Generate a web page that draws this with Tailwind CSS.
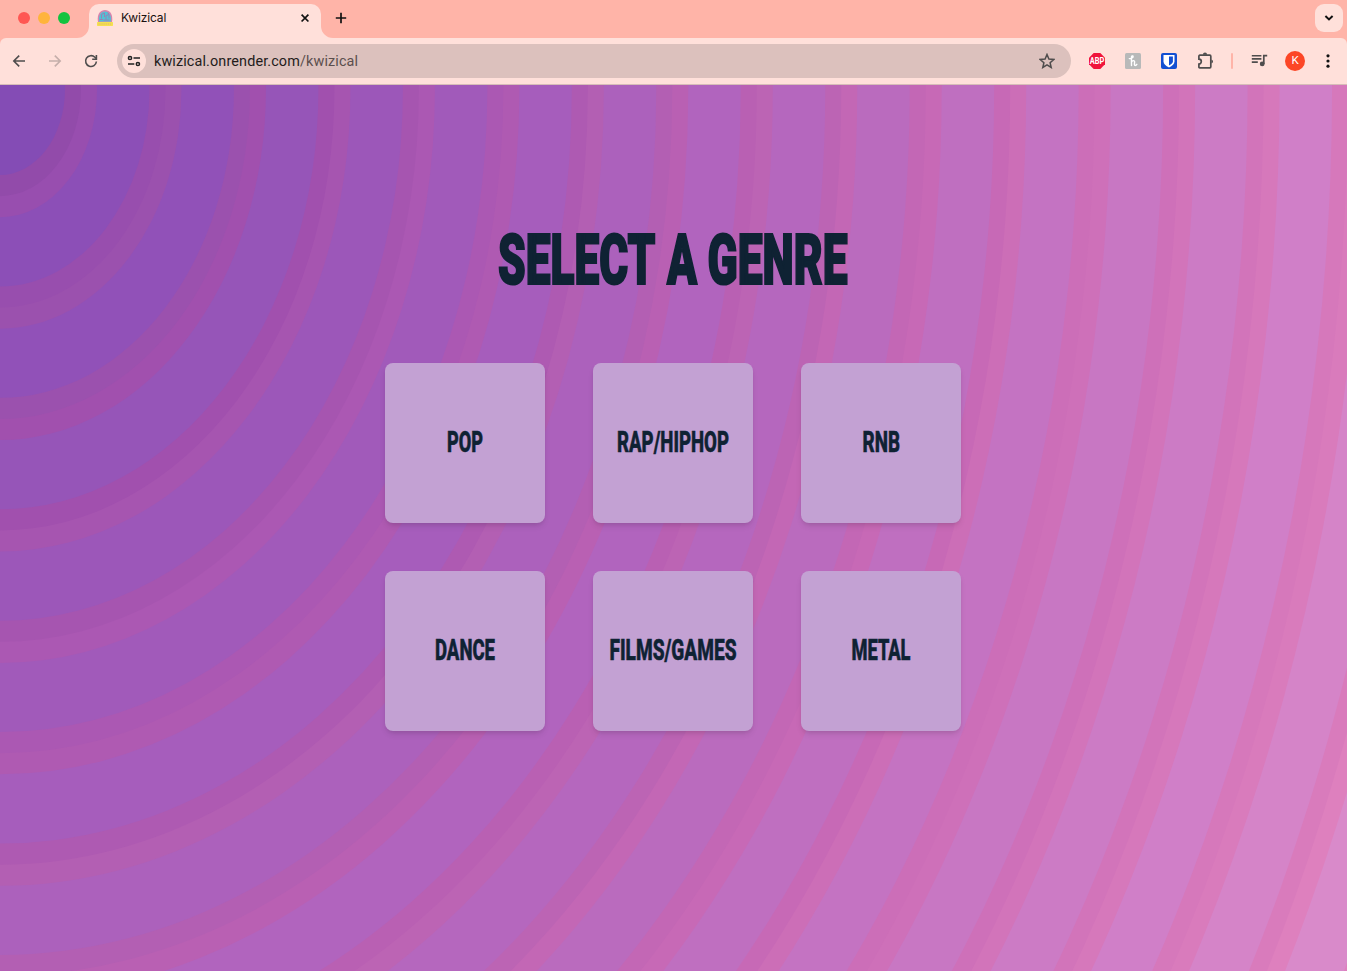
<!DOCTYPE html>
<html lang="en">
<head>
<meta charset="utf-8">
<title>Kwizical</title>
<script src="https://cdn.jsdelivr.net/npm/@tailwindcss/browser@4"></script>
</head>
<body class="h-[971px] w-[1347px] overflow-hidden bg-[#ffb4a8] font-['Inter',sans-serif]">
<div class="flex h-full flex-col">
  <!-- tab strip -->
  <header class="flex h-[38px] shrink-0 items-start pr-1">
    <div class="flex h-9 w-[77px] items-center gap-2 pl-[18px]">
      <span class="size-3 rounded-full bg-[#ff5753]"></span>
      <span class="size-3 rounded-full bg-[#ffb43c]"></span>
      <span class="size-3 rounded-full bg-[#13c33f]"></span>
    </div>
    <svg class="mt-[26px] size-3" viewBox="0 0 12 12"><path d="M12 0v12H0A12 12 0 0 0 12 0z" fill="#ffe0da"/></svg>
    <div class="mt-1 flex h-[34px] w-[232px] rounded-t-[10px] bg-[#ffe0da] pl-2">
      <svg class="mt-[6px] size-4" viewBox="0 0 16 16">
        <path d="M1 12C-.2 5 2.600 0 8 0s8.200 5 7 12z" fill="#d884ad"/>
        <path d="M2.200 11.500C1.200 5.500 4 1.400 8 1.400s6.800 4.100 5.800 10.100z" fill="#50c3d5"/>
        <path d="M4.500 4.500v4M4.500 4.500L7.500 3v4M9 5.500v4M9 5.500l3-1v4M2.800 9.500h3M10.500 2.800l1.500 1M6.500 10h6" stroke="#9a7fb5" stroke-width="1" fill="none"/>
        <rect y="12" width="16" height="4" rx=".7" fill="#f5e04e"/>
        <path d="M1.500 14h13" stroke="#e0b96a" stroke-width="1.100" stroke-dasharray="1.200 .7"/>
      </svg>
      <span class="ml-2 mt-[6px] w-[176px] text-[12px] leading-4 tracking-[-0.01em] text-[#1a1110]">Kwizical</span>
      <svg class="mt-[6px] size-4" viewBox="0 0 16 16"><path d="M4.600 4.700l6.800 6.800M11.400 4.700l-6.800 6.800" stroke="#111" stroke-width="1.700"/></svg>
    </div>
    <svg class="mt-[26px] size-3" viewBox="0 0 12 12"><path d="M0 0v12h12A12 12 0 0 1 0 0z" fill="#ffe0da"/></svg>
    <svg class="mt-[10px] size-4" viewBox="0 0 16 16"><path d="M8 2.800v10.400M2.800 8h10.400" stroke="#111" stroke-width="1.700"/></svg>
    <div class="ml-auto mt-1 flex size-7 items-center justify-center rounded-[9px] bg-[#ffe0da]">
      <svg class="size-4" viewBox="0 0 16 16"><path d="M4.400 6L8 9.400 11.600 6" fill="none" stroke="#111" stroke-width="2"/></svg>
    </div>
  </header>
  <!-- toolbar -->
  <div class="flex h-[47px] shrink-0 items-center rounded-t-[6px] border-b border-[#d6bdb8] bg-[#ffe0da] pl-[11px]">
    <svg class="size-4" viewBox="0 0 16 16"><path d="M14 8H3M8.200 2.600L2.800 8l5.400 5.400" fill="none" stroke="#4f4d4d" stroke-width="1.600"/></svg>
    <svg class="ml-5 size-4" viewBox="0 0 16 16"><path d="M2 8h11M7.800 2.600L13.200 8l-5.400 5.400" fill="none" stroke="#c5aeaa" stroke-width="1.600"/></svg>
    <svg class="ml-5 size-4" viewBox="0 0 16 16"><path d="M13.400 8.500A5.400 5.400 0 1 1 11.900 4.300L13.400 5.800" fill="none" stroke="#4f4d4d" stroke-width="1.600"/><path d="M14.200 2v5H9.200V5.400h3.400V2z" fill="#4f4d4d"/></svg>
    <div class="ml-[18px] flex h-[34px] w-[954px] items-center rounded-full bg-[#dcc1bd] pl-[5px] pr-4">
      <span class="flex size-6 items-center justify-center rounded-full bg-[#ffe0da]">
        <svg class="size-4" viewBox="0 0 16 16" fill="none" stroke="#222" stroke-width="1.500"><circle cx="4" cy="5" r="1.600"/><path d="M7.500 5H14M2 11h6.300"/><circle cx="11.900" cy="11" r="1.600"/></svg>
      </span>
      <svg class="ml-2 h-5 w-[230px]" viewBox="0 0 230 20" font-family="Roboto, sans-serif" font-size="14.400"><text x="0" y="15" textLength="204" fill="#231c1b">kwizical.onrender.com<tspan fill="#5b4f4d">/kwizical</tspan></text></svg>
      <svg class="ml-auto size-4" viewBox="0 0 16 16"><path d="M8 1.500l1.900 4.600 4.900.4-3.700 3.200 1.100 4.800L8 11.900l-4.200 2.600 1.100-4.800L1.200 6.500l4.900-.4z" fill="none" stroke="#4f4d4d" stroke-width="1.500"/></svg>
    </div>
    <svg class="ml-[18px] size-4 overflow-visible" viewBox="0 0 16 16"><path d="M4.700 0h6.600L16 4.700v6.600L11.300 16H4.700L0 11.300V4.700z" fill="#f0143c"/><text x="8" y="11.100" text-anchor="middle" font-family="Roboto, sans-serif" font-weight="700" font-size="8.600" textLength="14.600" lengthAdjust="spacingAndGlyphs" fill="#fff">ABP</text></svg>
    <svg class="ml-5 size-4" viewBox="0 0 16 16"><rect width="16" height="16" rx="1.500" fill="#b8b9b9"/><path d="M4.300 5.600c2.200 0 3.900-.9 3.800-2.100-.1-1-1.800-.8-1.700 1.200L6.500 12.500M6.500 9.300c.8-2 3.200-2.300 3.100-.3-.1 1.500-.6 3.500.6 3.500.9 0 1.400-.6 1.700-1.200" fill="none" stroke="#fff" stroke-width="1.400" stroke-linecap="round"/></svg>
    <svg class="ml-5 size-4" viewBox="0 0 16 16"><rect width="16" height="16" rx="2" fill="#124fd2"/><path d="M2.500 2h11v6.200c0 2.800-2.200 4.600-5.500 6.200-3.300-1.600-5.500-3.400-5.500-6.200z" fill="#fff"/><path d="M8 3.600h3.900v4.700c0 1.800-1.500 3-3.900 4.200z" fill="#124fd2"/></svg>
    <svg class="ml-[18px] size-5 overflow-visible" viewBox="-.5 0 20 20"><path d="M4.600 4.200h9.700a1 1 0 0 1 1 1v10.600a1 1 0 0 1-1 1H4.200a.8.800 0 0 1-.8-.8v-3a2.300 2.300 0 0 0 0-4.800V5.200a1 1 0 0 1 1.200-1z" fill="none" stroke="#4f4d4d" stroke-width="1.700"/><path d="M7.400 3.700a2.100 2.300 0 0 1 4.200 0zM15.900 8.400a2.300 2.200 0 0 1 0 4.200z" fill="#4f4d4d"/></svg>
    <span class="ml-4 h-4 w-[2px] rounded-full bg-[#ffb4a8]"></span>
    <svg class="ml-[18px] size-4 overflow-visible" viewBox="0 0 16 16"><path d="M.8 2.700h9.600M.8 5.900h9.600M.8 9.100h6" stroke="#4f4d4d" stroke-width="1.600"/><circle cx="11.200" cy="10.900" r="2.400" fill="#4f4d4d"/><path d="M12.800 10.900V2.700h3.400" fill="none" stroke="#4f4d4d" stroke-width="1.700"/></svg>
    <span class="ml-[18px] flex size-5 items-center justify-center rounded-full bg-[#fc4626] font-['Roboto',sans-serif] text-[11.500px] leading-none text-white">K</span>
    <svg class="ml-[15px] size-4" viewBox="0 0 16 16" fill="#111"><circle cx="8" cy="2.800" r="1.600"/><circle cx="8" cy="8" r="1.600"/><circle cx="8" cy="13.200" r="1.600"/></svg>
  </div>
  <!-- page -->
  <main class="relative flex h-[886px] flex-col items-center overflow-hidden">
    <svg class="absolute inset-0 h-full w-full" viewBox="0 0 1347 886"><rect width="1347" height="886" fill="#de8fcc"/><g id="rings" transform="translate(0 4.300) scale(1 1.319)"></g></svg>
    <h1 class="relative mt-[138px] h-[72px] w-[350px]">
      <svg class="h-[72px] w-[350px] overflow-visible" viewBox="0 0 350 72" font-family="Roboto, sans-serif" font-weight="900" font-size="71" fill="#0f2233" stroke="#0f2233" stroke-width="2.200">
        <text x="-1" y="61" textLength="157.500" lengthAdjust="spacingAndGlyphs">SELECT</text>
        <text x="168" y="61" textLength="30" lengthAdjust="spacingAndGlyphs">A</text>
        <text x="208.500" y="61" textLength="140" lengthAdjust="spacingAndGlyphs">GENRE</text>
      </svg>
    </h1>
    <div class="relative mt-[68px] mr-px grid grid-cols-3 gap-12">
      <div class="flex size-40 items-center justify-center rounded-lg bg-[#c3a1d3] shadow-md"><svg class="h-10 w-40 overflow-visible" viewBox="0 0 160 40" font-family="Roboto, sans-serif" font-weight="800" font-size="30" fill="#0f2233" stroke="#0f2233" stroke-width=".6"><text x="62" y="28.500" textLength="36" lengthAdjust="spacingAndGlyphs">POP</text></svg></div>
      <div class="flex size-40 items-center justify-center rounded-lg bg-[#c3a1d3] shadow-md"><svg class="h-10 w-40 overflow-visible" viewBox="0 0 160 40" font-family="Roboto, sans-serif" font-weight="800" font-size="30" fill="#0f2233" stroke="#0f2233" stroke-width=".6"><text x="24" y="28.500" textLength="112" lengthAdjust="spacingAndGlyphs">RAP/HIPHOP</text></svg></div>
      <div class="flex size-40 items-center justify-center rounded-lg bg-[#c3a1d3] shadow-md"><svg class="h-10 w-40 overflow-visible" viewBox="0 0 160 40" font-family="Roboto, sans-serif" font-weight="800" font-size="30" fill="#0f2233" stroke="#0f2233" stroke-width=".6"><text x="61.500" y="28.500" textLength="37.500" lengthAdjust="spacingAndGlyphs">RNB</text></svg></div>
      <div class="flex size-40 items-center justify-center rounded-lg bg-[#c3a1d3] shadow-md"><svg class="h-10 w-40 overflow-visible" viewBox="0 0 160 40" font-family="Roboto, sans-serif" font-weight="800" font-size="30" fill="#0f2233" stroke="#0f2233" stroke-width=".6"><text x="50" y="28.500" textLength="60" lengthAdjust="spacingAndGlyphs">DANCE</text></svg></div>
      <div class="flex size-40 items-center justify-center rounded-lg bg-[#c3a1d3] shadow-md"><svg class="h-10 w-40 overflow-visible" viewBox="0 0 160 40" font-family="Roboto, sans-serif" font-weight="800" font-size="30" fill="#0f2233" stroke="#0f2233" stroke-width=".6"><text x="16.500" y="28.500" textLength="127" lengthAdjust="spacingAndGlyphs">FILMS/GAMES</text></svg></div>
      <div class="flex size-40 items-center justify-center rounded-lg bg-[#c3a1d3] shadow-md"><svg class="h-10 w-40 overflow-visible" viewBox="0 0 160 40" font-family="Roboto, sans-serif" font-weight="800" font-size="30" fill="#0f2233" stroke="#0f2233" stroke-width=".6"><text x="50.500" y="28.500" textLength="59" lengthAdjust="spacingAndGlyphs">METAL</text></svg></div>
    </div>
  </main>
</div>
<script>
// Each entry: [plain band, inner edge of ring, outer edge of ring], from the centre outwards.
const bands = [
  ['#844cb5','#924baa','#984eaf'],['#8c4fb7','#984eae','#9b51ae'],['#9151b8','#9b51ae','#a150ae'],
  ['#9655b8','#a150ae','#a655b0'],['#9c57b9','#a655b0','#ab58b3'],['#a15aba','#ab58b3','#af5ab2'],
  ['#a65dbc','#ae5ab2','#b35fb3'],['#ac61bc','#b35fb3','#b960b3'],['#b164be','#b960b3','#bc64b4'],
  ['#b567be','#bc64b4','#c367b5'],['#ba6bbe','#c367b5','#c769b6'],['#bf6fc0','#c769b6','#cc6eb7'],
  ['#c473c2','#cc6eb8','#ce70b9'],['#c877c3','#ce70b9','#d274ba'],['#cc7bc5','#d274ba','#d678bb'],
  ['#d07fc8','#d678bb','#d97bbc'],['#d584c8','#d97bbc','#de80be'],['#d98aca','#de80be','#e085c0']
];
const g = document.getElementById('rings');
for (let i = bands.length - 1; i >= 0; i--) {
  const r = 65 + 84.47 * i;
  [[r + 32, 2], [r + 16, 1], [r, 0]].forEach(([radius, c]) => {
    const el = document.createElementNS('http://www.w3.org/2000/svg', 'circle');
    el.setAttribute('r', radius);
    el.setAttribute('fill', bands[i][c]);
    g.appendChild(el);
  });
}
</script>
</body>
</html>
